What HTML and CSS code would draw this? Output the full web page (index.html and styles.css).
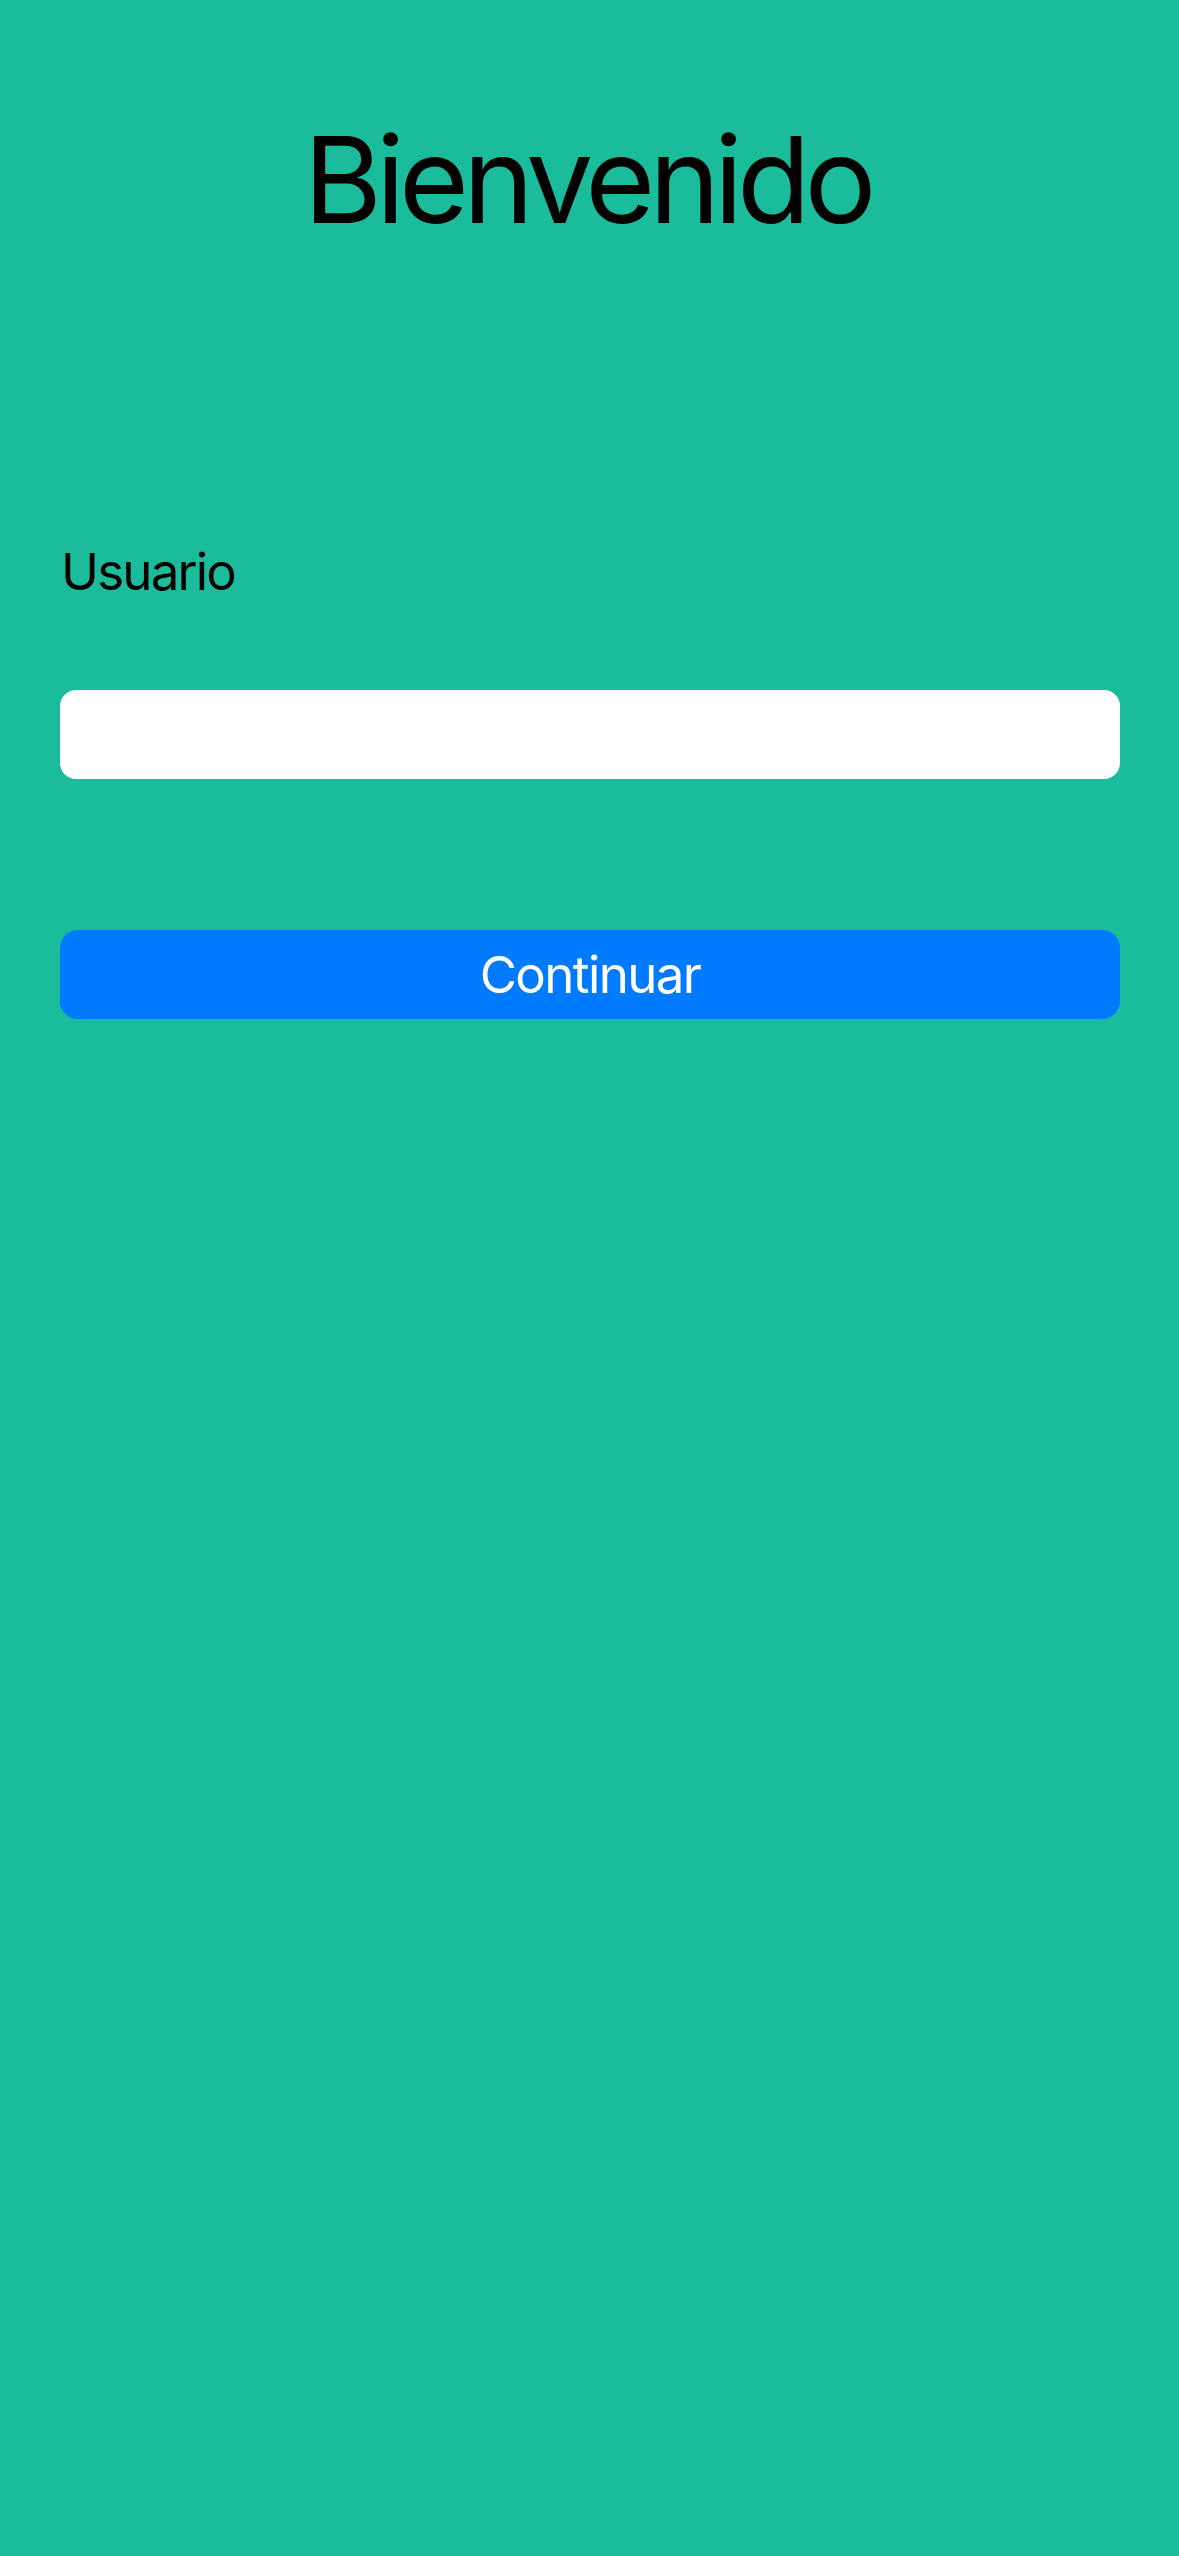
FILE: index.html
```html
<!DOCTYPE html>
<html lang="es">
<head>
<meta charset="utf-8">
<title>Bienvenido</title>
<link rel="stylesheet" href="styles.css">
</head>
<body>
<main class="screen">
  <h1 class="title">Bienvenido</h1>
  <form class="form">
    <label class="label" for="user">Usuario</label>
    <input class="field" id="user" type="text">
    <button class="button" type="button">Continuar</button>
  </form>
</main>
</body>
</html>
```
FILE: styles.css
```css
html, body {
  margin: 0;
  padding: 0;
  background: #1abc9c;
}
.screen {
  width: 1179px;
  height: 2556px;
  box-sizing: border-box;
  padding: 0 59px 0 60px;
  font-family: Inter, "Noto Sans", sans-serif;
  color: #000;
}
.title {
  margin: 0;
  padding-top: 120px;
  padding-right: 6px;
  font-size: 120px;
  font-weight: 400;
  line-height: 120px;
  text-align: center;
  letter-spacing: -6px;
}
.form {
  display: flex;
  flex-direction: column;
  margin-top: 302px;
}
.label {
  font-size: 51px;
  line-height: 60px;
  letter-spacing: -1.8px;
  padding-left: 1px;
}
.field {
  margin-top: 88px;
  height: 89px;
  border: none;
  border-radius: 16px;
  background: #fff;
  box-sizing: border-box;
  padding: 0 20px;
  font: inherit;
  font-size: 51px;
  outline: none;
}
.button {
  margin-top: 151px;
  height: 89px;
  border: none;
  border-radius: 18px;
  background: #007aff;
  color: #fff;
  font-family: Inter, "Noto Sans", sans-serif;
  font-size: 51px;
  letter-spacing: -1.6px;
  padding: 0;
}
```
